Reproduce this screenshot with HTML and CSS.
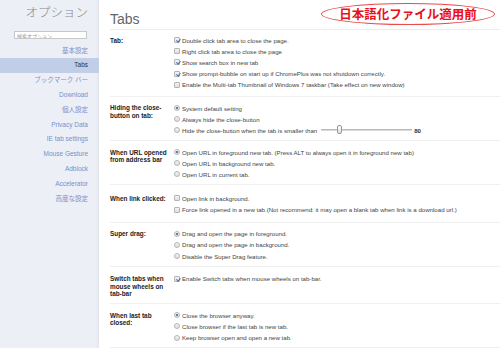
FILE: index.html
```html
<!DOCTYPE html>
<html lang="ja">
<head>
<meta charset="utf-8">
<title>オプション</title>
<link rel="stylesheet" href="styles.css">
</head>
<body>
<aside class="side">
  <h1 class="side-title">オプション</h1>
  <input class="search" type="text" placeholder="検索オプション">
  <nav class="nav">
    <a class="nav-item">基本設定</a>
    <a class="nav-item sel">Tabs</a>
    <a class="nav-item">ブックマーク バー</a>
    <a class="nav-item">Download</a>
    <a class="nav-item">個人設定</a>
    <a class="nav-item">Privacy Data</a>
    <a class="nav-item">IE tab settings</a>
    <a class="nav-item">Mouse Gesture</a>
    <a class="nav-item">Adblock</a>
    <a class="nav-item">Accelerator</a>
    <a class="nav-item">高度な設定</a>
  </nav>
</aside>
<main class="main">
  <header class="head"><h2 class="head-title">Tabs</h2></header>

  <section class="sec"><div class="inner">
    <div class="lbl">Tab:</div>
    <div class="opts">
      <div class="row"><span class="cb on"></span>Double click tab area to close the page.</div>
      <div class="row"><span class="cb"></span>Right click tab area to close the page</div>
      <div class="row"><span class="cb on"></span>Show search box in new tab</div>
      <div class="row"><span class="cb on"></span>Show prompt-bubble on start up if ChromePlus was not shutdown correctly.</div>
      <div class="row"><span class="cb"></span>Enable the Multi-tab Thumbnail of Windows 7 taskbar (Take effect on new window)</div>
    </div>
  </div></section>

  <section class="sec"><div class="inner">
    <div class="lbl">Hiding the close-button on tab:</div>
    <div class="opts">
      <div class="row"><span class="rd on"></span>System default setting</div>
      <div class="row"><span class="rd"></span>Always hide the close-button</div>
      <div class="row"><span class="rd"></span>Hide the close-button when the tab is smaller than<span class="slider"><span class="thumb"></span></span><span class="val">80</span></div>
    </div>
  </div></section>

  <section class="sec"><div class="inner">
    <div class="lbl">When URL opened from address bar</div>
    <div class="opts">
      <div class="row"><span class="rd on"></span>Open URL in foreground new tab. (Press ALT to always open it in foreground new tab)</div>
      <div class="row"><span class="rd"></span>Open URL in background new tab.</div>
      <div class="row"><span class="rd"></span>Open URL in current tab.</div>
    </div>
  </div></section>

  <section class="sec"><div class="inner">
    <div class="lbl">When link clicked:</div>
    <div class="opts">
      <div class="row"><span class="cb"></span>Open link in background.</div>
      <div class="row"><span class="cb"></span>Force link opened in a new tab.(Not recommend: it may open a blank tab when link is a download url.)</div>
    </div>
  </div></section>

  <section class="sec"><div class="inner">
    <div class="lbl">Super drag:</div>
    <div class="opts">
      <div class="row"><span class="rd on"></span>Drag and open the page in foreground.</div>
      <div class="row"><span class="rd"></span>Drag and open the page in background.</div>
      <div class="row"><span class="rd"></span>Disable the Super Drag feature.</div>
    </div>
  </div></section>

  <section class="sec"><div class="inner">
    <div class="lbl">Switch tabs when mouse wheels on tab-bar</div>
    <div class="opts">
      <div class="row"><span class="cb on"></span>Enable Switch tabs when mouse wheels on tab-bar.</div>
    </div>
  </div></section>

  <section class="sec"><div class="inner">
    <div class="lbl">When last tab closed:</div>
    <div class="opts">
      <div class="row"><span class="rd on"></span>Close the browser anyway.</div>
      <div class="row"><span class="rd"></span>Close browser if the last tab is new tab.</div>
      <div class="row"><span class="rd"></span>Keep browser open and open a new tab.</div>
    </div>
  </div></section>
</main>
<div class="badge">日本語化ファイル適用前</div>
</body>
</html>
```
FILE: styles.css
```css
* { box-sizing: border-box; }
html, body { margin: 0; padding: 0; }
body {
  width: 500px;
  height: 348px;
  overflow: hidden;
  display: flex;
  background: #fff;
  font-family: "Liberation Sans", Arial, "Noto Sans CJK JP", sans-serif;
  color: #333;
}
.side {
  width: 99px;
  flex: none;
  background: #eceff5;
  box-shadow: inset -3px 0 3px -2px rgba(0,0,0,0.06);
  display: flex;
  flex-direction: column;
  align-items: stretch;
}
.side-title {
  margin: 0;
  padding: 4px 11px 0 0;
  height: 31px;
  text-align: right;
  font-family: "Noto Sans CJK JP", sans-serif;
  font-weight: 300;
  font-size: 12.5px;
  line-height: 16px;
  color: #8a8a8a;
}
.search {
  margin: 0 12px 0 14px;
  width: 73px;
  height: 8px;
  padding: 0 2px;
  border: 1px solid #c8c8c8;
  background: #fff;
  font-family: "Noto Sans CJK JP", sans-serif;
  font-size: 5px;
  outline: none;
}
.search::placeholder { color: #999; }
.nav {
  margin-top: 4.6px;
  display: flex;
  flex-direction: column;
}
.nav-item {
  height: 14.8px;
  line-height: 14.8px;
  padding-right: 11px;
  text-align: right;
  font-family: "Liberation Sans", "Noto Sans CJK JP", sans-serif;
  font-size: 6.5px;
  color: #7790cc;
}
.nav-item.sel {
  background: #c0cee8;
  color: #333;
}
.main {
  flex: 1;
  padding-left: 11px;
  min-width: 0;
}
.head {
  height: 30px;
  border-bottom: 1px solid #ececec;
}
.head-title {
  margin: 0;
  padding-top: 12px;
  font-size: 14px;
  line-height: 14px;
  font-weight: normal;
  color: #666;
}
.sec {
  min-height: 37.5px;
  padding: 5.5px 0 4px;
  border-bottom: 1px solid #efefef;
  display: flex;
  align-items: center;
}
.sec:first-of-type { padding-top: 4.5px; padding-bottom: 5.5px; }
.inner {
  display: flex;
  align-items: flex-start;
  width: 100%;
}
.lbl {
  width: 60px;
  margin-right: 4px;
  flex: none;
  padding-top: 2px;
  font-size: 6.4px;
  line-height: 7.5px;
  font-weight: bold;
  color: #222;
}
.opts {
  display: flex;
  flex-direction: column;
}
.row {
  height: 11.2px;
  display: flex;
  align-items: center;
  white-space: nowrap;
  font-size: 6.1px;
  color: #444;
}
.cb, .rd {
  flex: none;
  width: 6px;
  height: 6px;
  margin-right: 2px;
  border: 1px solid #b4b4b4;
  background: linear-gradient(#f4f4f4, #dedede);
  position: relative;
}
.cb { border-radius: 1px; }
.cb.on::after {
  content: "";
  position: absolute;
  left: 1.5px;
  top: 0;
  width: 1.5px;
  height: 3px;
  border: solid #4a6fa8;
  border-width: 0 1px 1px 0;
  transform: rotate(40deg);
}
.rd { border-radius: 50%; }
.rd.on::after {
  content: "";
  position: absolute;
  left: 1px;
  top: 1px;
  width: 2px;
  height: 2px;
  border-radius: 50%;
  background: #2d5a9c;
}
.slider {
  display: inline-block;
  position: relative;
  width: 91px;
  height: 2px;
  margin-left: 4px;
  background: #d8d8d8;
  border-top: 1px solid #bbb;
}
.thumb {
  position: absolute;
  left: 16px;
  top: -5px;
  width: 5px;
  height: 9px;
  border: 1px solid #999;
  border-radius: 2px;
  background: linear-gradient(#fff, #ddd);
}
.val {
  margin-left: 2px;
  font-weight: bold;
  color: #333;
}
.badge {
  position: absolute;
  left: 321px;
  top: 3px;
  width: 174px;
  height: 22px;
  border: 1px solid #e84a4a;
  border-radius: 50%;
  text-align: center;
  font-family: "Noto Sans CJK JP", sans-serif;
  font-weight: bold;
  font-size: 12.5px;
  line-height: 20px;
  color: #e8101a;
  background: transparent;
}
```
